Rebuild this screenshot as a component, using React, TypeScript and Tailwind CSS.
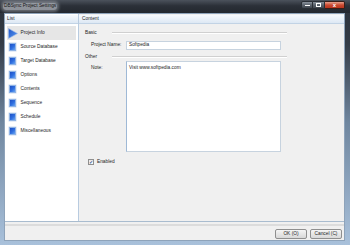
import React from "react";

function BlueSquare() {
  return (
    <div className="w-[7px] h-[8px] border border-[#8fb3e6] bg-[linear-gradient(135deg,#1d4fc4_0%,#2f6fe0_55%,#6aa6f2_100%)] shadow-[0_0_0_0.5px_#c8d8ee]" />
  );
}

function Triangle() {
  return (
    <svg width="10" height="11" viewBox="0 0 10 11" className="block">
      <defs>
        <linearGradient id="tg" x1="0" y1="0" x2="1" y2="1">
          <stop offset="0" stopColor="#1f55c8" />
          <stop offset="1" stopColor="#5b9af0" />
        </linearGradient>
      </defs>
      <path d="M0.5 0.5 L9.5 5.5 L0.5 10.5 Z" fill="url(#tg)" stroke="#9dbbe8" strokeWidth="0.6" />
    </svg>
  );
}

export default function App() {
  const items = [
    "Source Database",
    "Target Database",
    "Options",
    "Contents",
    "Sequence",
    "Schedule",
    "Miscellaneous",
  ];
  return (
    <div className="w-[350px] h-[245px] flex flex-col overflow-hidden bg-[linear-gradient(180deg,#2b3139_0%,#343c47_18%,#6f869f_50%,#a9c1db_100%)] font-['Liberation_Sans',Arial,sans-serif] text-[4.8px] leading-none text-[#1e1e1e]">
      {/* Title bar */}
      <div className="h-[13px] flex items-start pl-[3px] pr-[5px] bg-[linear-gradient(180deg,#4b525c_0%,#2b3038_45%,#23282f_100%)]">
        <div className="mt-[3px] h-[7px] px-[1px] flex items-center rounded-[3px] bg-[rgba(225,230,236,0.55)] shadow-[0_0_3px_2px_rgba(225,230,236,0.35)] text-[#151515]">
          DBSync Project Settings
        </div>
        <div className="ml-auto mt-[1px] flex">
          <div className="w-[12px] h-[8px] rounded-l-[2px] border border-[#2a2f36] bg-[linear-gradient(180deg,#8a929c_0%,#5b636d_50%,#3f464f_100%)] flex items-end justify-center pb-[2px]">
            <div className="w-[5px] h-[1.5px] bg-white" />
          </div>
          <div className="w-[12px] h-[8px] border-y border-r border-[#2a2f36] bg-[linear-gradient(180deg,#8a929c_0%,#5b636d_50%,#3f464f_100%)] flex items-center justify-center">
            <div className="w-[5px] h-[4px] border border-white border-t-[1.5px]" />
          </div>
          <div className="w-[20px] h-[8px] rounded-r-[2px] border-y border-r border-[#3a1d18] bg-[linear-gradient(180deg,#e7a18e_0%,#cc4a31_50%,#b8341e_100%)] flex items-center justify-center text-white text-[6px] font-bold">
            x
          </div>
        </div>
      </div>

      {/* Client area */}
      <div className="flex-1 ml-[4px] mr-[5px] mb-[4px] flex flex-col bg-[#f0f0f0] border border-[#8ea3ba]">
        <div className="h-[208px] flex border-b border-[#a9bccf]">
          {/* List panel */}
          <div className="w-[74px] flex flex-col bg-white border-r border-[#b8cbe0]">
            <div className="h-[9px] mt-[1px] flex items-center pl-[2px] bg-[linear-gradient(180deg,#f7fafd_0%,#dde8f4_100%)] border-b border-[#c2d3e5]">
              List
            </div>
            <div className="pt-[2px] flex flex-col">
              <div className="h-[14px] mx-[2px] flex items-center bg-[#e6e6e6]">
                <div className="w-[13px] pl-[1px] flex justify-start">
                  <Triangle />
                </div>
                <span className="ml-[0.5px]">Project Info</span>
              </div>
              {items.map((t) => (
                <div key={t} className="h-[14px] mx-[2px] flex items-center">
                  <div className="w-[13px] pl-[2px] flex">
                    <BlueSquare />
                  </div>
                  <span className="ml-[0.5px]">{t}</span>
                </div>
              ))}
            </div>
          </div>

          {/* Content panel */}
          <div className="flex-1 flex flex-col">
            <div className="h-[9px] mt-[1px] flex items-center pl-[3px] bg-[linear-gradient(180deg,#f7fafd_0%,#dde8f4_100%)] border-b border-[#c2d3e5]">
              Content
            </div>
            <div className="pl-[6px] flex flex-col w-[208px]">
              {/* Basic */}
              <div className="mt-[6px] h-[6px] flex items-center">
                <span className="w-[27px]">Basic</span>
                <div className="flex-1 h-[2px] border-t border-[#d0d0d0] border-b border-b-white" />
              </div>
              <div className="mt-[5px] h-[9px] flex items-center pl-[6px]">
                <span className="w-[35px]">Project Name:</span>
                <div className="w-[155px] h-[9px] bg-white border border-[#c7d3df] flex items-center pl-[2px]">
                  Softpedia
                </div>
              </div>
              {/* Other */}
              <div className="mt-[4px] h-[6px] flex items-center">
                <span className="w-[27px]">Other</span>
                <div className="flex-1 h-[2px] border-t border-[#d0d0d0] border-b border-b-white" />
              </div>
              <div className="mt-[1px] flex pl-[6px]">
                <span className="w-[35px] pt-[5px]">Note:</span>
                <div className="w-[155px] h-[91px] bg-white border border-[#c7d3df] border-l-[#9fb9d6] pl-[2px] pt-[4px]">
                  Visit www.softpedia.com
                </div>
              </div>
              <div className="mt-[6px] h-[8px] flex items-center pl-[3px]">
                <div className="w-[6px] h-[6px] border border-[#8f8f8f] bg-[linear-gradient(180deg,#e8e8e8,#fafafa)] flex items-center justify-center text-[#2a4a8a] text-[5px] font-bold">
                  ✓
                </div>
                <span className="ml-[3px]">Enabled</span>
              </div>
            </div>
          </div>
        </div>

        {/* Bottom bar */}
        <div className="mt-[2px] h-[2px] bg-[#dcdcdc]" />
        <div className="mt-[3px] flex justify-end gap-[3px] pr-[2px]">
          <div className="w-[32px] h-[10px] rounded-[2px] border border-[#8f8f8f] bg-[linear-gradient(180deg,#f5f5f5_0%,#e6e6e6_50%,#d8d8d8_100%)] flex items-center justify-center">
            OK (O)
          </div>
          <div className="w-[32px] h-[10px] rounded-[2px] border border-[#8f8f8f] bg-[linear-gradient(180deg,#f5f5f5_0%,#e6e6e6_50%,#d8d8d8_100%)] flex items-center justify-center">
            Cancel (C)
          </div>
        </div>
      </div>
    </div>
  );
}
